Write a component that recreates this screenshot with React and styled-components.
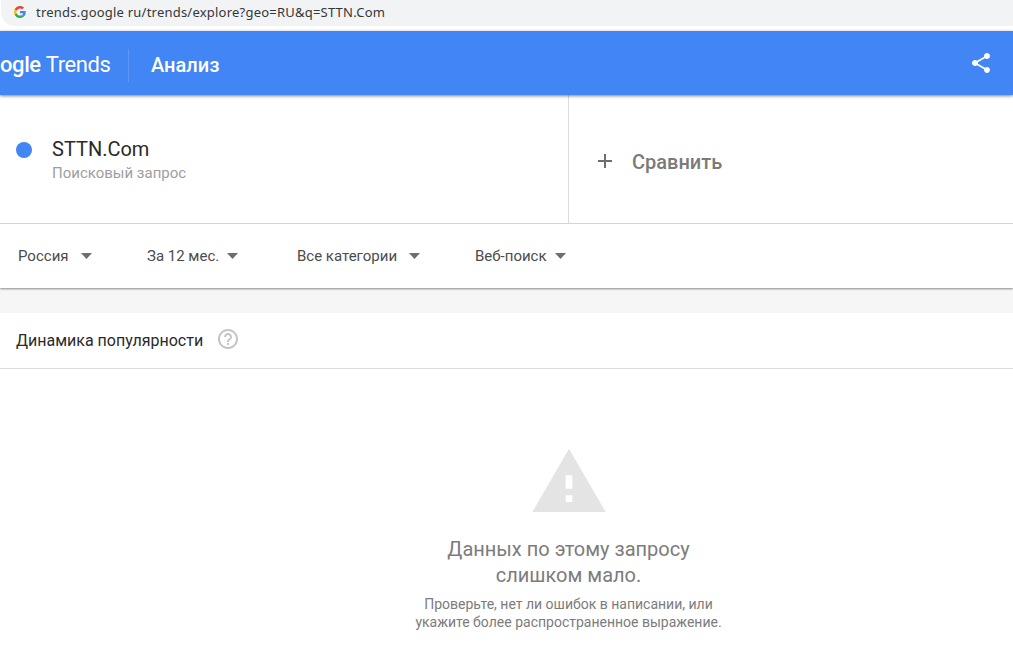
import styled, { createGlobalStyle } from "styled-components";
import { MdHelpOutline, MdShare, MdWarning } from "react-icons/md";

const GlobalStyles = createGlobalStyle`
  *,
  *::before,
  *::after {
    box-sizing: border-box;
    margin: 0;
    padding: 0;
  }

  body {
    background-color: #fff;
    color: #2a2a2a;
    font-family: Roboto, "Noto Sans", sans-serif;
    overflow: hidden;
  }

  button {
    border: none;
    background: none;
    font: inherit;
    color: inherit;
  }

  svg {
    display: block;
    flex-shrink: 0;
  }
`;

const StyledPage = styled.div`
  height: 645px;
  display: flex;
  flex-direction: column;
  overflow: hidden;
`;

const StyledAddressBar = styled.div`
  height: 26px;
  margin: 0 0 5px 1px;
  padding: 0 0 2px 13px;
  border-bottom-left-radius: 14px;
  background-color: #f1f3f4;

  display: flex;
  align-items: center;
  gap: 10px;
`;

const Url = styled.span`
  color: #35373a;
  font-family: "Noto Sans", sans-serif;
  font-size: 13px;
  line-height: 18px;
  letter-spacing: 0.22px;
  white-space: nowrap;
`;

const StyledHeader = styled.header`
  position: relative;
  height: 64px;
  flex-shrink: 0;
  padding-right: 20px;
  background-color: #4285f4;
  box-shadow: 0 1px 3px rgba(0, 0, 0, 0.5);
  color: #fff;

  display: flex;
  align-items: center;
`;

const Logo = styled.div`
  width: 129px;
  height: 33px;
  margin-top: 4px;
  padding-bottom: 2px;
  border-right: 1px solid #5e97f6;
  font-size: 22px;
  white-space: nowrap;

  display: flex;
  align-items: center;
  gap: 5px;
`;

const LogoGoogle = styled.span`
  font-weight: 500;
  letter-spacing: -0.4px;
`;

const LogoTrends = styled.span`
  font-weight: 400;
  letter-spacing: -0.4px;
`;

const PageTitle = styled.h1`
  margin-left: 22px;
  padding-top: 4px;
  font-size: 20px;
  font-weight: 500;
  line-height: 24px;
`;

const ShareButton = styled.button`
  margin-left: auto;
`;

const StyledTerms = styled.section`
  height: 129px;
  flex-shrink: 0;
  border-bottom: 1px solid #dcdcdc;

  display: flex;
`;

const SearchTerm = styled.div`
  width: 569px;
  padding: 42px 0 0 16px;
  border-right: 1px solid #dcdcdc;

  display: flex;
  gap: 20px;
`;

const TermDot = styled.span`
  width: 16px;
  height: 16px;
  margin-top: 5px;
  border-radius: 50%;
  background-color: #4285f4;
`;

const TermName = styled.p`
  font-size: 20px;
  line-height: 24px;
`;

const TermType = styled.p`
  color: #9e9e9e;
  font-size: 15px;
  line-height: 25px;
`;

const CompareButton = styled.button`
  padding: 6px 0 0 29px;
  color: #7a7a7a;
  font-size: 20px;
  font-weight: 500;
  line-height: 24px;

  display: flex;
  align-items: center;
  gap: 20px;

  & svg {
    margin-bottom: 3px;
  }
`;

const StyledFilters = styled.nav`
  position: relative;
  height: 64px;
  flex-shrink: 0;
  padding-left: 18px;
  box-shadow: 0 1px 2px rgba(0, 0, 0, 0.45);

  display: flex;
  align-items: center;
`;

const FilterButton = styled.button`
  width: ${(props) => props.$width}px;
  color: #4c4c4c;
  font-size: 15px;
  line-height: 20px;
  white-space: nowrap;

  display: flex;
  align-items: center;
  gap: ${(props) => props.$gap}px;
`;

const Divider = styled.div`
  height: 25px;
  flex-shrink: 0;
  background-color: #f6f6f6;
`;

const WidgetHeader = styled.div`
  height: 56px;
  flex-shrink: 0;
  padding-left: 16px;
  border-bottom: 1px solid #dcdcdc;

  display: flex;
  align-items: center;
  gap: 13px;
`;

const WidgetTitle = styled.h2`
  padding-top: 1px;
  font-size: 16px;
  font-weight: 400;
  line-height: 20px;
`;

const HelpIcon = styled(MdHelpOutline)`
  margin-bottom: 4px;
  color: #c4c4c4;
`;

const StyledEmptyState = styled.div`
  flex: 1;
  padding: 73px 0 0 124px;
  width: 1013px;
  color: #7c7c7c;
  text-align: center;

  display: flex;
  flex-direction: column;
  align-items: center;
`;

const EmptyTitle = styled.p`
  margin-top: 14px;
  font-size: 20px;
  line-height: 26px;
`;

const EmptyHint = styled.p`
  margin-top: 7px;
  font-size: 14px;
  line-height: 18px;
`;

const filters = [
  { label: "Россия", width: 129, gap: 12 },
  { label: "За 12 мес.", width: 150, gap: 8 },
  { label: "Все категории", width: 178, gap: 12 },
  { label: "Веб-поиск", width: 100, gap: 8 },
];

function GoogleIcon() {
  return (
    <svg width="12" height="12" viewBox="0 0 48 48">
      <path
        fill="#EA4335"
        d="M24 9.5c3.54 0 6.71 1.22 9.21 3.6l6.85-6.85C35.9 2.38 30.47 0 24 0 14.62 0 6.51 5.38 2.56 13.22l7.98 6.19C12.43 13.72 17.74 9.5 24 9.5z"
      />
      <path
        fill="#4285F4"
        d="M46.98 24.55c0-1.57-.15-3.09-.38-4.55H24v9.02h12.94c-.58 2.96-2.26 5.48-4.78 7.18l7.73 6c4.51-4.18 7.09-10.36 7.09-17.65z"
      />
      <path
        fill="#FBBC05"
        d="M10.53 28.59a14.5 14.5 0 0 1 0-9.18l-7.98-6.19a24 24 0 0 0 0 21.56l7.98-6.19z"
      />
      <path
        fill="#34A853"
        d="M24 48c6.48 0 11.93-2.13 15.89-5.81l-7.73-6c-2.15 1.45-4.92 2.3-8.16 2.3-6.26 0-11.57-4.22-13.47-9.91l-7.98 6.19C6.51 42.62 14.62 48 24 48z"
      />
    </svg>
  );
}

function PlusIcon() {
  return (
    <svg width="14" height="14" viewBox="0 0 14 14">
      <path d="M7 0v14M0 7h14" stroke="#6e6e6e" strokeWidth="2" />
    </svg>
  );
}

function ArrowIcon() {
  return (
    <svg width="11" height="6" viewBox="0 0 11 6">
      <path d="M0 0h11L5.5 6z" fill="#6e6e6e" />
    </svg>
  );
}

function App() {
  return (
    <>
      <GlobalStyles />
      <StyledPage>
        <StyledAddressBar>
          <GoogleIcon />
          <Url>trends.google ru/trends/explore?geo=RU&amp;q=STTN.Com</Url>
        </StyledAddressBar>

        <StyledHeader>
          <Logo>
            <LogoGoogle>ogle</LogoGoogle>
            <LogoTrends>Trends</LogoTrends>
          </Logo>
          <PageTitle>Анализ</PageTitle>
          <ShareButton>
            <MdShare size={24} />
          </ShareButton>
        </StyledHeader>

        <StyledTerms>
          <SearchTerm>
            <TermDot />
            <div>
              <TermName>STTN.Com</TermName>
              <TermType>Поисковый запрос</TermType>
            </div>
          </SearchTerm>
          <CompareButton>
            <PlusIcon />
            Сравнить
          </CompareButton>
        </StyledTerms>

        <StyledFilters>
          {filters.map(({ label, width, gap }) => (
            <FilterButton key={label} $width={width} $gap={gap}>
              {label}
              <ArrowIcon />
            </FilterButton>
          ))}
        </StyledFilters>

        <Divider />

        <WidgetHeader>
          <WidgetTitle>Динамика популярности</WidgetTitle>
          <HelpIcon size={24} />
        </WidgetHeader>

        <StyledEmptyState>
          <MdWarning size={80} color="#e4e4e4" />
          <EmptyTitle>
            Данных по этому запросу
            <br />
            слишком мало.
          </EmptyTitle>
          <EmptyHint>
            Проверьте, нет ли ошибок в написании, или
            <br />
            укажите более распространенное выражение.
          </EmptyHint>
        </StyledEmptyState>
      </StyledPage>
    </>
  );
}

export default App;
